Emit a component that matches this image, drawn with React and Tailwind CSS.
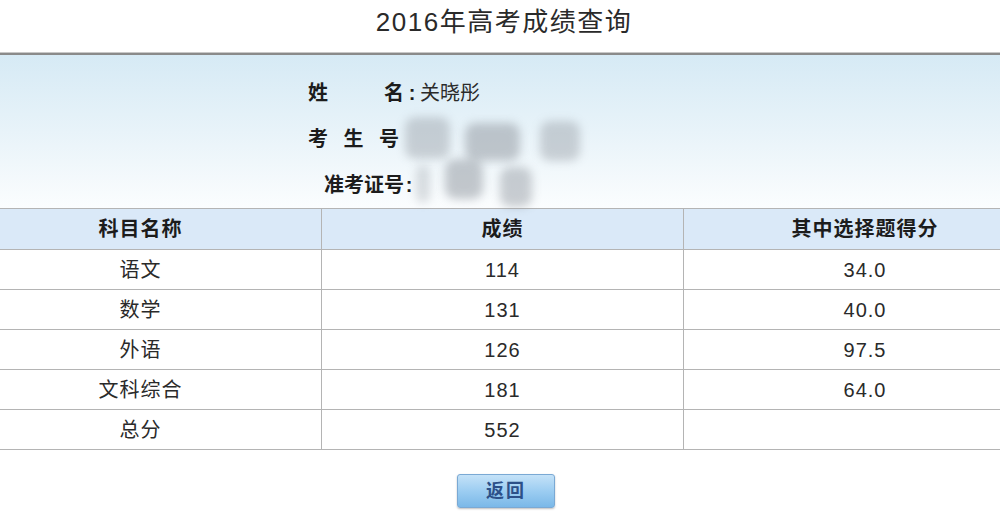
import React from "react";

const font = { fontFamily: '"Liberation Sans", "Noto Sans CJK SC", sans-serif' };

const rows = [
  ["语文", "114", "34.0"],
  ["数学", "131", "40.0"],
  ["外语", "126", "97.5"],
  ["文科综合", "181", "64.0"],
  ["总分", "552", ""],
];

function Blob({ cls }) {
  return <div className={"absolute rounded-[10px] bg-[#8e949c] blur-[5px] " + cls} />;
}

export default function App() {
  return (
    <div className="w-[1000px] h-[512px] overflow-hidden bg-white relative" style={font}>
      <div className="h-[52px] flex items-center justify-center">
        <div className="text-[26px] tracking-[1.5px] text-[#2a2a2a] pl-[8px] pb-[8px]">2016年高考成绩查询</div>
      </div>
      <div className="h-[1px] bg-[#c8c8c8]" />
      <div className="h-[2px] bg-[#8a8a8a]" />
      <div className="relative h-[153px] bg-gradient-to-b from-[#d6eaf5] via-[#e8f3f9] to-[#fbfdfe] pt-[15px] pl-[308px]">
        <div className="h-[46px] flex items-center text-[20px] text-[#1c1c1c]">
          <div className="w-[96px] flex justify-between font-bold"><span>姓</span><span>名</span></div>
          <span className="font-bold w-[16px] text-center">:</span>
          <span className="text-[#2a2a2a]">关晓彤</span>
        </div>
        <div className="h-[46px] flex items-center text-[20px] text-[#1c1c1c]">
          <div className="w-[91px] flex justify-between font-bold"><span>考</span><span>生</span><span>号</span></div>
        </div>
        <div className="h-[46px] flex items-center text-[20px] text-[#1c1c1c]">
          <div className="w-[96px] flex justify-end font-bold"><span>准考证号</span></div>
          <span className="font-bold w-[10px] text-center">:</span>
        </div>
        <Blob cls="left-[405px] top-[62px] w-[45px] h-[42px] opacity-40" />
        <Blob cls="left-[465px] top-[68px] w-[55px] h-[38px] opacity-50" />
        <Blob cls="left-[540px] top-[66px] w-[40px] h-[40px] opacity-40" />
        <Blob cls="left-[416px] top-[110px] w-[14px] h-[38px] opacity-30" />
        <Blob cls="left-[445px] top-[104px] w-[38px] h-[40px] opacity-50" />
        <Blob cls="left-[500px] top-[112px] w-[32px] h-[40px] opacity-45" />
      </div>

      <div className="ml-[-40px] w-[1086px] border-t border-[#b4b4b4]">
        <div className="grid grid-cols-3 h-[41px] bg-[#dae9f8] border-b border-[#b4b4b4]">
          {["科目名称", "成绩", "其中选择题得分"].map((h, i) => (
            <div
              key={h}
              className={"flex items-center justify-center font-bold text-[20px] tracking-[1px] text-[#1c1c1c] " + (i < 2 ? "border-r border-[#b4b4b4]" : "")}
            >
              {h}
            </div>
          ))}
        </div>
        {rows.map((r) => (
          <div key={r[0]} className="grid grid-cols-3 h-[40px] border-b border-[#b4b4b4] bg-white">
            {r.map((c, i) => (
              <div
                key={i}
                className={"flex items-center justify-center text-[20px] tracking-[1px] text-[#2a2a2a] " + (i < 2 ? "border-r border-[#b4b4b4]" : "")}
              >
                {c}
              </div>
            ))}
          </div>
        ))}
      </div>

      <div className="flex justify-center pt-[24px] pl-[12px]">
        <div className="w-[98px] h-[34px] rounded-[3px] border border-[#7aa9d4] bg-gradient-to-b from-[#c4e2f8] via-[#9ccdf1] to-[#7ab8e8] shadow-[0_1px_2px_rgba(0,0,0,0.25)] flex items-center justify-center">
          <span className="text-[18px] font-bold text-[#2c5088] tracking-[2px]">返回</span>
        </div>
      </div>
    </div>
  );
}
